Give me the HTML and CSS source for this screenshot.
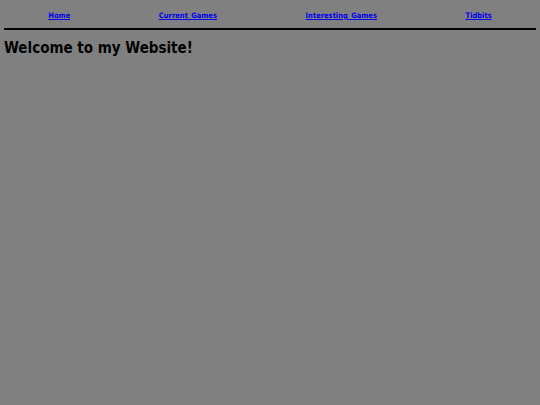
FILE: index.html
```html
<!DOCTYPE html>
<html>
<head>
<meta charset="utf-8">
<link rel="stylesheet" href="styles.css">
</head>
<body>
<nav class="nav">
  <div class="cell"><a href="#">Home</a></div>
  <div class="cell"><a href="#">Current_Games</a></div>
  <div class="cell"><a href="#">Interesting_Games</a></div>
  <div class="cell"><a href="#">Tidbits</a></div>
</nav>
<hr class="rule">
<h1 class="title">Welcome to my Website!</h1>
</body>
</html>
```
FILE: styles.css
```css
html, body {
  background: #808080;
}
body {
  margin: 4px;
  font-family: "DejaVu Sans Condensed", "DejaVu Sans", sans-serif;
  color: #000;
}
.nav {
  display: flex;
  padding-top: 7px;
  height: 17px;
}
.cell {
  flex: 1 1 auto;
  text-align: center;
  font-size: 7.5px;
  line-height: 10px;
}
.cell a {
  color: #0000ee;
  font-weight: bold;
  text-decoration: underline;
}
.rule {
  margin: 0;
  border: 0;
  height: 2px;
  background: #000;
}
.title {
  margin: 9px 0 0 0;
  font-size: 15px;
  line-height: 18px;
  font-weight: bold;
}
```
